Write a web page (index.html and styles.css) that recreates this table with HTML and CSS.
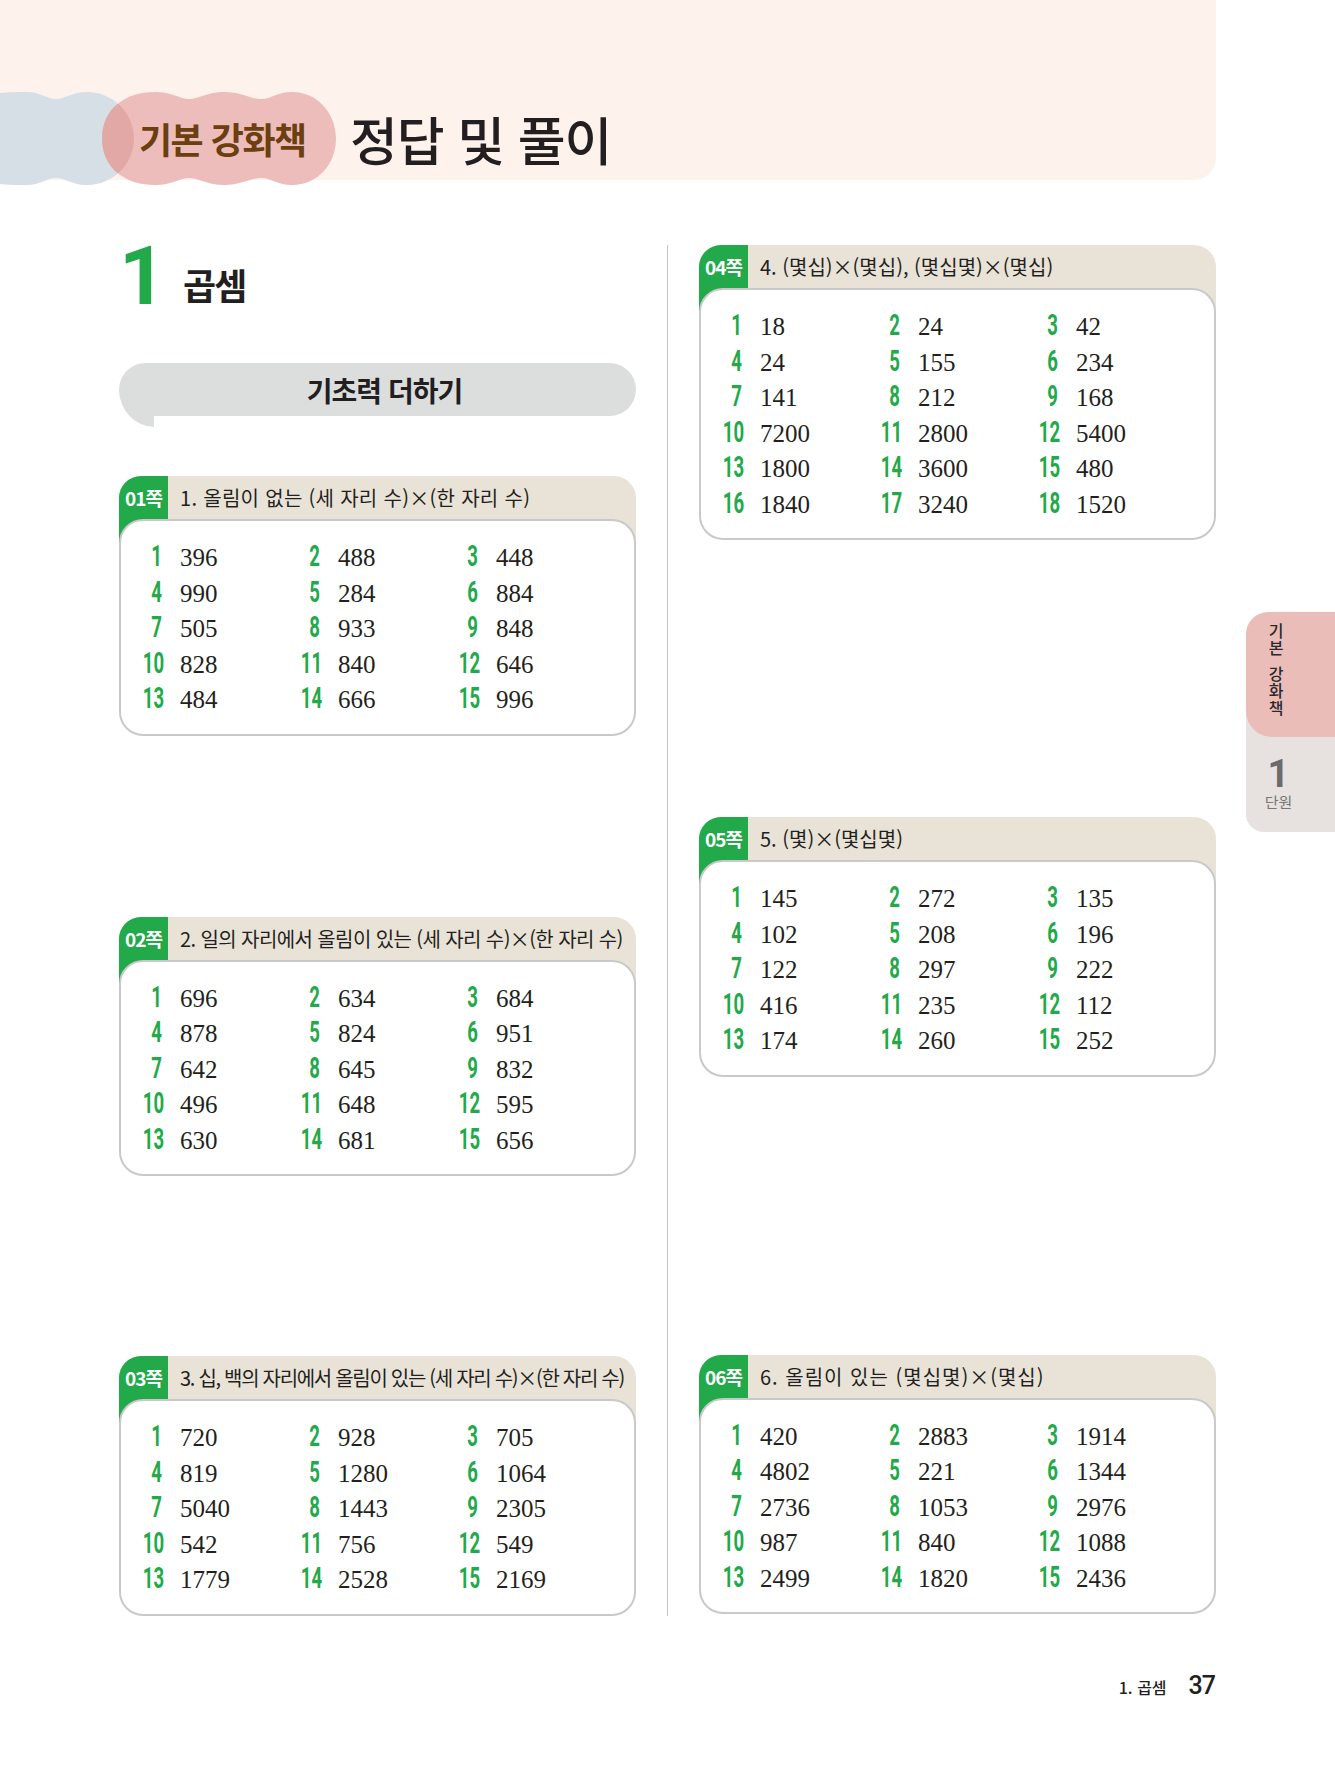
FILE: index.html
```html
<!DOCTYPE html>
<html lang="ko">
<head>
<meta charset="utf-8">
<title>기본 강화책 정답 및 풀이</title>
<link rel="stylesheet" href="styles.css">
</head>
<body>
<div class="page">
  <div class="main">
    <header class="header">
      <div class="badge">
        <svg class="clouds" width="336" height="97" viewBox="0 0 336 97">
          <defs>
            <clipPath id="pinkclip">
              <path d="M102 48.5 C102 19 125 2 155 2 C172 2 180 9 189 9 C198 9 208 2 224 2 C242 2 250 9 262 9 C270 9 278 2 292 2 C318 2 336 24 336 48.5 C336 74 318 95 292 95 C278 95 270 88 262 88 C250 88 242 95 224 95 C208 95 198 88 189 88 C180 88 172 95 155 95 C125 95 102 78 102 48.5 Z"/>
            </clipPath>
          </defs>
          <path fill="#d6dfe6" d="M0 3 C8 2 16 2 27 2 C40 2 47 9 56 9 C65 9 72 2 87 2 C113 2 134 23 134 48.5 C134 74 113 95 87 95 C72 95 65 88 56 88 C47 88 40 95 27 95 C16 95 8 95 0 94 Z"/>
          <path fill="#ecbdba" d="M102 48.5 C102 19 125 2 155 2 C172 2 180 9 189 9 C198 9 208 2 224 2 C242 2 250 9 262 9 C270 9 278 2 292 2 C318 2 336 24 336 48.5 C336 74 318 95 292 95 C278 95 270 88 262 88 C250 88 242 95 224 95 C208 95 198 88 189 88 C180 88 172 95 155 95 C125 95 102 78 102 48.5 Z"/>
          <path fill="#e2a8a6" clip-path="url(#pinkclip)" d="M0 3 C8 2 16 2 27 2 C40 2 47 9 56 9 C65 9 72 2 87 2 C113 2 134 23 134 48.5 C134 74 113 95 87 95 C72 95 65 88 56 88 C47 88 40 95 27 95 C16 95 8 95 0 94 Z"/>
        </svg>
        <span class="badge-text">기본 강화책</span>
      </div>
      <h1 class="title">정답 및 풀이</h1>
    </header>

    <div class="content">
      <div class="col">
        <div class="chapter"><span class="chapter-no">1</span><span class="chapter-name">곱셈</span></div>
        <div class="pill"><span>기초력 더하기</span></div>

        <section class="card card-01">
          <div class="card-head"><span class="tab">01쪽</span><span class="card-title t01">1. 올림이 없는 (세 자리 수)×(한 자리 수)</span></div>
          <div class="card-body">
            <div class="item"><span class="no">1</span><span class="val">396</span></div>
            <div class="item"><span class="no">2</span><span class="val">488</span></div>
            <div class="item"><span class="no">3</span><span class="val">448</span></div>
            <div class="item"><span class="no">4</span><span class="val">990</span></div>
            <div class="item"><span class="no">5</span><span class="val">284</span></div>
            <div class="item"><span class="no">6</span><span class="val">884</span></div>
            <div class="item"><span class="no">7</span><span class="val">505</span></div>
            <div class="item"><span class="no">8</span><span class="val">933</span></div>
            <div class="item"><span class="no">9</span><span class="val">848</span></div>
            <div class="item"><span class="no">10</span><span class="val">828</span></div>
            <div class="item"><span class="no">11</span><span class="val">840</span></div>
            <div class="item"><span class="no">12</span><span class="val">646</span></div>
            <div class="item"><span class="no">13</span><span class="val">484</span></div>
            <div class="item"><span class="no">14</span><span class="val">666</span></div>
            <div class="item"><span class="no">15</span><span class="val">996</span></div>
          </div>
        </section>

        <section class="card card-02">
          <div class="card-head"><span class="tab">02쪽</span><span class="card-title t02">2. 일의 자리에서 올림이 있는 (세 자리 수)×(한 자리 수)</span></div>
          <div class="card-body">
            <div class="item"><span class="no">1</span><span class="val">696</span></div>
            <div class="item"><span class="no">2</span><span class="val">634</span></div>
            <div class="item"><span class="no">3</span><span class="val">684</span></div>
            <div class="item"><span class="no">4</span><span class="val">878</span></div>
            <div class="item"><span class="no">5</span><span class="val">824</span></div>
            <div class="item"><span class="no">6</span><span class="val">951</span></div>
            <div class="item"><span class="no">7</span><span class="val">642</span></div>
            <div class="item"><span class="no">8</span><span class="val">645</span></div>
            <div class="item"><span class="no">9</span><span class="val">832</span></div>
            <div class="item"><span class="no">10</span><span class="val">496</span></div>
            <div class="item"><span class="no">11</span><span class="val">648</span></div>
            <div class="item"><span class="no">12</span><span class="val">595</span></div>
            <div class="item"><span class="no">13</span><span class="val">630</span></div>
            <div class="item"><span class="no">14</span><span class="val">681</span></div>
            <div class="item"><span class="no">15</span><span class="val">656</span></div>
          </div>
        </section>

        <section class="card card-03">
          <div class="card-head"><span class="tab">03쪽</span><span class="card-title t03">3. 십, 백의 자리에서 올림이 있는 (세 자리 수)×(한 자리 수)</span></div>
          <div class="card-body">
            <div class="item"><span class="no">1</span><span class="val">720</span></div>
            <div class="item"><span class="no">2</span><span class="val">928</span></div>
            <div class="item"><span class="no">3</span><span class="val">705</span></div>
            <div class="item"><span class="no">4</span><span class="val">819</span></div>
            <div class="item"><span class="no">5</span><span class="val">1280</span></div>
            <div class="item"><span class="no">6</span><span class="val">1064</span></div>
            <div class="item"><span class="no">7</span><span class="val">5040</span></div>
            <div class="item"><span class="no">8</span><span class="val">1443</span></div>
            <div class="item"><span class="no">9</span><span class="val">2305</span></div>
            <div class="item"><span class="no">10</span><span class="val">542</span></div>
            <div class="item"><span class="no">11</span><span class="val">756</span></div>
            <div class="item"><span class="no">12</span><span class="val">549</span></div>
            <div class="item"><span class="no">13</span><span class="val">1779</span></div>
            <div class="item"><span class="no">14</span><span class="val">2528</span></div>
            <div class="item"><span class="no">15</span><span class="val">2169</span></div>
          </div>
        </section>
      </div>

      <div class="divider"></div>

      <div class="col">
        <section class="card card-04">
          <div class="card-head"><span class="tab">04쪽</span><span class="card-title">4. (몇십)×(몇십), (몇십몇)×(몇십)</span></div>
          <div class="card-body">
            <div class="item"><span class="no">1</span><span class="val">18</span></div>
            <div class="item"><span class="no">2</span><span class="val">24</span></div>
            <div class="item"><span class="no">3</span><span class="val">42</span></div>
            <div class="item"><span class="no">4</span><span class="val">24</span></div>
            <div class="item"><span class="no">5</span><span class="val">155</span></div>
            <div class="item"><span class="no">6</span><span class="val">234</span></div>
            <div class="item"><span class="no">7</span><span class="val">141</span></div>
            <div class="item"><span class="no">8</span><span class="val">212</span></div>
            <div class="item"><span class="no">9</span><span class="val">168</span></div>
            <div class="item"><span class="no">10</span><span class="val">7200</span></div>
            <div class="item"><span class="no">11</span><span class="val">2800</span></div>
            <div class="item"><span class="no">12</span><span class="val">5400</span></div>
            <div class="item"><span class="no">13</span><span class="val">1800</span></div>
            <div class="item"><span class="no">14</span><span class="val">3600</span></div>
            <div class="item"><span class="no">15</span><span class="val">480</span></div>
            <div class="item"><span class="no">16</span><span class="val">1840</span></div>
            <div class="item"><span class="no">17</span><span class="val">3240</span></div>
            <div class="item"><span class="no">18</span><span class="val">1520</span></div>
          </div>
        </section>

        <section class="card card-05">
          <div class="card-head"><span class="tab">05쪽</span><span class="card-title">5. (몇)×(몇십몇)</span></div>
          <div class="card-body">
            <div class="item"><span class="no">1</span><span class="val">145</span></div>
            <div class="item"><span class="no">2</span><span class="val">272</span></div>
            <div class="item"><span class="no">3</span><span class="val">135</span></div>
            <div class="item"><span class="no">4</span><span class="val">102</span></div>
            <div class="item"><span class="no">5</span><span class="val">208</span></div>
            <div class="item"><span class="no">6</span><span class="val">196</span></div>
            <div class="item"><span class="no">7</span><span class="val">122</span></div>
            <div class="item"><span class="no">8</span><span class="val">297</span></div>
            <div class="item"><span class="no">9</span><span class="val">222</span></div>
            <div class="item"><span class="no">10</span><span class="val">416</span></div>
            <div class="item"><span class="no">11</span><span class="val">235</span></div>
            <div class="item"><span class="no">12</span><span class="val">112</span></div>
            <div class="item"><span class="no">13</span><span class="val">174</span></div>
            <div class="item"><span class="no">14</span><span class="val">260</span></div>
            <div class="item"><span class="no">15</span><span class="val">252</span></div>
          </div>
        </section>

        <section class="card card-06">
          <div class="card-head"><span class="tab">06쪽</span><span class="card-title t06">6. 올림이 있는 (몇십몇)×(몇십)</span></div>
          <div class="card-body">
            <div class="item"><span class="no">1</span><span class="val">420</span></div>
            <div class="item"><span class="no">2</span><span class="val">2883</span></div>
            <div class="item"><span class="no">3</span><span class="val">1914</span></div>
            <div class="item"><span class="no">4</span><span class="val">4802</span></div>
            <div class="item"><span class="no">5</span><span class="val">221</span></div>
            <div class="item"><span class="no">6</span><span class="val">1344</span></div>
            <div class="item"><span class="no">7</span><span class="val">2736</span></div>
            <div class="item"><span class="no">8</span><span class="val">1053</span></div>
            <div class="item"><span class="no">9</span><span class="val">2976</span></div>
            <div class="item"><span class="no">10</span><span class="val">987</span></div>
            <div class="item"><span class="no">11</span><span class="val">840</span></div>
            <div class="item"><span class="no">12</span><span class="val">1088</span></div>
            <div class="item"><span class="no">13</span><span class="val">2499</span></div>
            <div class="item"><span class="no">14</span><span class="val">1820</span></div>
            <div class="item"><span class="no">15</span><span class="val">2436</span></div>
          </div>
        </section>
      </div>
    </div>

    <footer class="footer"><span class="foot-chapter">1. 곱셈</span><span class="foot-page">37</span></footer>
  </div>

  <aside class="aside">
    <div class="side-book">
      <span class="vtext">기본</span><span class="vtext">강화책</span>
    </div>
    <div class="side-unit">
      <div class="side-unit-inner"><span class="unit-no">1</span><span class="unit-label">단원</span></div>
    </div>
  </aside>
</div>
</body>
</html>
```

FILE: styles.css
```css
html, body {
  margin: 0;
  padding: 0;
  background: #ffffff;
}

body {
  font-family: "Noto Sans CJK KR", "Noto Sans", sans-serif;
  color: #231f20;
  width: 1335px;
  height: 1772px;
  overflow: hidden;
}

.page {
  display: flex;
  align-items: flex-start;
}

.main {
  width: 1216px;
  flex: none;
}

/* ---------- header ---------- */
.header {
  height: 180px;
  box-sizing: border-box;
  padding-top: 90px;
  background: #fef2ed;
  border-bottom-right-radius: 22px;
  display: flex;
  align-items: flex-start;
}

.badge {
  position: relative;
  width: 336px;
  height: 97px;
  flex: none;
  box-sizing: border-box;
  padding-left: 139px;
  display: flex;
  align-items: center;
}

.clouds {
  position: absolute;
  left: 0;
  top: 0;
}

.badge-text {
  position: relative;
  font-size: 36px;
  font-weight: 700;
  letter-spacing: -1.5px;
  color: #6b3f10;
  line-height: 1;
  margin-top: -2px;
}

.title {
  margin: 0 0 0 14px;
  font-size: 52px;
  font-weight: 500;
  letter-spacing: -1px;
  line-height: 97px;
  color: #231f20;
}

/* ---------- content ---------- */
.content {
  display: flex;
  margin-top: 65px;
  padding-left: 119px;
}

.col {
  width: 517px;
  flex: none;
}

.divider {
  width: 1px;
  background: #c4c4c4;
  margin: 0 31px;
  flex: none;
}

.chapter {
  display: flex;
  align-items: flex-start;
  height: 62px;
}

.chapter-no {
  font-family: Roboto, "Noto Sans", sans-serif;
  font-weight: 700;
  font-size: 82px;
  line-height: 62px;
  color: #21a94a;
  margin-left: 0;
}

.chapter-name {
  font-size: 36px;
  font-weight: 700;
  letter-spacing: -2px;
  line-height: 36px;
  margin-top: 21px;
  margin-left: 17px;
}

.pill {
  position: relative;
  margin-top: 56px;
  height: 53px;
  background: #dcdedd;
  border-radius: 27px;
  display: flex;
  align-items: center;
  justify-content: center;
  padding-left: 14px;
  box-sizing: border-box;
}

.pill::after {
  content: "";
  position: absolute;
  left: 0;
  top: 26px;
  width: 35px;
  height: 38px;
  background: #dcdedd;
  border-bottom-left-radius: 35px 38px;
}

.pill span {
  position: relative;
  font-size: 28px;
  font-weight: 700;
  letter-spacing: -1px;
  color: #231f20;
}

/* ---------- cards ---------- */
.card {
  position: relative;
}

.card-01 { margin-top: 60px; }
.card-02 { margin-top: 181px; }
.card-03 { margin-top: 180px; }
.card-05 { margin-top: 277px; }
.card-06 { margin-top: 278px; }

.card-head {
  height: 67px;
  background: #e9e3d7;
  border-radius: 22px 22px 0 0;
  display: flex;
  align-items: flex-start;
}

.tab {
  width: 49px;
  height: 67px;
  flex: none;
  background: #21a94a;
  border-top-left-radius: 22px;
  color: #ffffff;
  font-size: 19px;
  font-weight: 700;
  letter-spacing: -1px;
  line-height: 43px;
  text-align: center;
}

.card-title {
  margin-left: 12px;
  font-size: 20px;
  line-height: 43px;
  white-space: nowrap;
  color: #231f20;
}

.card-title.t01 { letter-spacing: 0.3px; }
.card-title.t02 { letter-spacing: -0.6px; }
.card-title.t03 { letter-spacing: -1.3px; }
.card-title.t06 { letter-spacing: 1px; }

.card-body {
  position: relative;
  z-index: 1;
  margin-top: -24px;
  background: #ffffff;
  border: 2px solid #c9c9c9;
  border-radius: 24px;
  padding: 18px 0 17px 11px;
  display: grid;
  grid-template-columns: repeat(3, 158px);
  grid-auto-rows: 35.5px;
}

.item {
  display: flex;
  align-items: baseline;
  height: 35.5px;
}

.no {
  display: inline-block;
  width: 30px;
  flex: none;
  text-align: right;
  font-family: Roboto, "Noto Sans", sans-serif;
  font-weight: 700;
  font-size: 29px;
  line-height: 35.5px;
  color: #21a94a;
  transform: scaleX(0.64);
  transform-origin: right center;
}

.val {
  margin-left: 18px;
  font-family: "Liberation Serif", "DejaVu Serif", serif;
  font-size: 25px;
  line-height: 35.5px;
  color: #231f20;
}

/* ---------- footer ---------- */
.footer {
  display: flex;
  justify-content: flex-end;
  align-items: baseline;
  margin-top: 55px;
  line-height: 30px;
}

.foot-chapter {
  font-size: 16px;
  font-weight: 500;
  color: #231f20;
}

.foot-page {
  font-family: Roboto, "Noto Sans", sans-serif;
  font-size: 25px;
  font-weight: 500;
  margin-left: 22px;
  margin-right: 1px;
  letter-spacing: -1px;
  color: #231f20;
}

/* ---------- side tabs ---------- */
.aside {
  width: 89px;
  flex: none;
  margin-left: 30px;
  padding-top: 612px;
}

.side-book {
  position: relative;
  z-index: 1;
  height: 125px;
  box-sizing: border-box;
  background: #ebbdb9;
  border-radius: 22px 0 0 26px;
  padding: 11px 0 0 21px;
  display: flex;
  flex-direction: column;
  align-items: flex-start;
  gap: 9px;
}

.vtext {
  writing-mode: vertical-rl;
  text-orientation: upright;
  font-size: 16px;
  line-height: 17px;
  letter-spacing: 1px;
  color: #2a2a2a;
  font-weight: 500;
}

.side-unit {
  margin-top: -25px;
  height: 120px;
  box-sizing: border-box;
  padding: 47px 0 0 17px;
  background: #e7e2df;
  border-bottom-left-radius: 18px;
}

.side-unit-inner {
  width: 31px;
  display: flex;
  flex-direction: column;
  align-items: center;
}

.unit-no {
  font-family: Roboto, "Noto Sans", sans-serif;
  font-weight: 700;
  font-size: 38px;
  line-height: 30px;
  color: #6a6a6a;
}

.unit-label {
  font-size: 15px;
  line-height: 18px;
  margin-top: 4px;
  color: #777777;
}
```
